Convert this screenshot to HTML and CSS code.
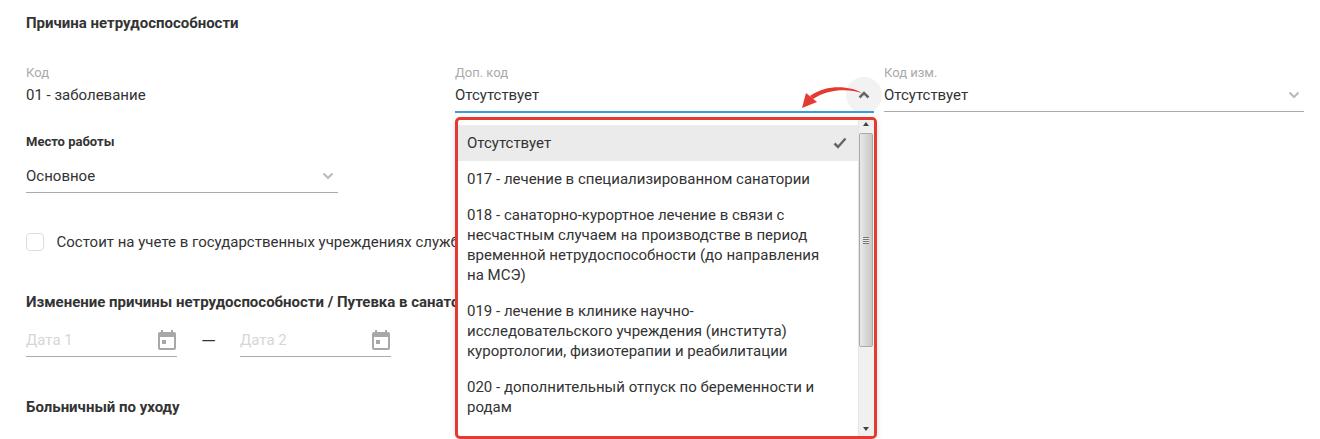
FILE: index.html
```html
<!DOCTYPE html>
<html lang="ru">
<head>
<meta charset="utf-8">
<title>Причина нетрудоспособности</title>
<link rel="stylesheet" href="styles.css">
</head>
<body>
<main class="page">
  <h2 class="section-title first">Причина нетрудоспособности</h2>
  <div class="code-row">
    <div class="field">
      <div class="field-label">Код</div>
      <div class="field-value plain">01 - заболевание</div>
    </div>
    <div class="field field-open">
      <div class="field-label">Доп. код</div>
      <div class="field-value active">
        <span>Отсутствует</span>
        <span class="icon-ring">
          <svg class="chevron dark" viewBox="0 0 12 8"><path d="M1.500 6.500 6 2l4.500 4.500" /></svg>
        </span>
      </div>
      <div class="menu">
        <ul class="menu-list">
          <li class="menu-item selected"><span>Отсутствует</span>
            <svg class="check" viewBox="0 0 14 12"><path d="M1.500 6.500 5 10l7.500-8.500" /></svg>
          </li>
          <li class="menu-item">017 - лечение в специализированном санатории</li>
          <li class="menu-item">018 - санаторно-курортное лечение в связи с несчастным случаем на производстве в период временной нетрудоспособности (до направления на МСЭ)</li>
          <li class="menu-item">019 - лечение в клинике научно-исследовательского учреждения (института) курортологии, физиотерапии и реабилитации</li>
          <li class="menu-item">020 - дополнительный отпуск по беременности и родам</li>
        </ul>
        <div class="scrollbar">
          <span class="arrow-up"></span>
          <div class="thumb"><span class="grip"></span></div>
          <span class="arrow-down"></span>
        </div>
      </div>
      <svg class="callout" viewBox="0 0 80 40">
        <path class="callout-head" d="M67 12C55 5 32 3 15 15L18 18C33 7.500 54 7.500 67 12Z" />
        <path class="callout-head" d="M7 27 11 12 22 21Z" />
      </svg>
    </div>
    <div class="field">
      <div class="field-label">Код изм.</div>
      <div class="field-value">
        <span>Отсутствует</span>
        <svg class="chevron" viewBox="0 0 12 8"><path d="M1.500 1.500 6 6l4.500-4.500" /></svg>
      </div>
    </div>
  </div>

  <div class="workplace">
    <div class="bold-label">Место работы</div>
    <div class="field-value">
      <span>Основное</span>
      <svg class="chevron" viewBox="0 0 12 8"><path d="M1.500 1.500 6 6l4.500-4.500" /></svg>
    </div>
  </div>

  <label class="check-row">
    <span class="checkbox"></span>
    <span class="check-text">Состоит на учете в государственных учреждениях службы занятости</span>
  </label>

  <h2 class="section-title change">Изменение причины нетрудоспособности / Путевка в санаторий</h2>
  <div class="date-row">
    <div class="date-field">
      <span>Дата 1</span>
      <svg class="calendar" viewBox="0 0 18 20"><path d="M3 0h2v2h8V0h2v2h1a2 2 0 0 1 2 2v14a2 2 0 0 1-2 2H2a2 2 0 0 1-2-2V4a2 2 0 0 1 2-2h1zM2 7v11h14V7zm2 3h4v4H4z" fill-rule="evenodd"/></svg>
    </div>
    <span class="dash">—</span>
    <div class="date-field">
      <span>Дата 2</span>
      <svg class="calendar" viewBox="0 0 18 20"><path d="M3 0h2v2h8V0h2v2h1a2 2 0 0 1 2 2v14a2 2 0 0 1-2 2H2a2 2 0 0 1-2-2V4a2 2 0 0 1 2-2h1zM2 7v11h14V7zm2 3h4v4H4z" fill-rule="evenodd"/></svg>
    </div>
  </div>

  <h2 class="section-title care">Больничный по уходу</h2>
</main>
</body>
</html>
```
FILE: styles.css
```css
html {
  background: #fff;
}
html, body {
  margin: 0;
  height: 439px;
  overflow: hidden;
}
body {
  font-family: Roboto, "Liberation Sans", sans-serif;
  font-size: 15px;
  color: #333;
}
.page {
  padding: 0 16px 0 26px;
}
.section-title {
  margin: 0;
  font-size: 15px;
  line-height: 20px;
  font-weight: 700;
  color: #333;
  white-space: nowrap;
}
.section-title.first { padding-top: 13px; }
.section-title.change { margin-top: 40px; }
.section-title.care { margin-top: 37px; }

.code-row {
  display: grid;
  grid-template-columns: 419px 419px 420px;
  column-gap: 10px;
  margin-top: 33px;
}
.field { position: relative; min-width: 0; }
.field-label {
  font-size: 13px;
  line-height: 14px;
  color: #aaa;
}
.field-value {
  display: flex;
  align-items: center;
  justify-content: space-between;
  height: 30px;
  padding-bottom: 3px;
  box-sizing: border-box;
  border-bottom: 1px solid #aaa;
  font-size: 15px;
  line-height: 20px;
  color: #333;
  margin-top: 2px;
}
.field-value.plain { border-bottom-color: transparent; }
.field-value.active {
  height: 31px;
  border-bottom: 2px solid #3d9bd9;
  position: relative;
}
.chevron {
  width: 12px;
  height: 8px;
  margin-right: 4px;
  fill: none;
  stroke: #bbb;
  stroke-width: 2.200;
}
.chevron.dark { stroke: #666; stroke-width: 2.500; margin: 0 1px 0 0; }
.icon-ring {
  position: absolute;
  right: -8px;
  top: -5px;
  width: 36px;
  height: 36px;
  border-radius: 50%;
  background: #f2f2f2;
  display: flex;
  align-items: center;
  justify-content: center;
  z-index: -1;
}
.menu {
  position: absolute;
  left: 0;
  top: 51px;
  width: 422px;
  height: 322px;
  box-sizing: border-box;
  border: 3px solid #e53a31;
  border-radius: 5px;
  background: #fff;
  box-shadow: 0 2px 6px rgba(0, 0, 0, .12);
  display: flex;
  overflow: hidden;
  z-index: 2;
}
.menu-list {
  list-style: none;
  margin: 0;
  padding: 5px 0 0;
  flex: 1;
  min-width: 0;
  overflow: hidden;
}
.menu-item {
  padding: 8px 36px 8px 9px;
  line-height: 20px;
  font-size: 15px;
  color: #333;
}
.menu-item.selected {
  background: #ebebeb;
  display: flex;
  align-items: center;
  justify-content: space-between;
  padding-right: 11px;
}
.check {
  width: 14px;
  height: 12px;
  fill: none;
  stroke: #666;
  stroke-width: 2.500;
}
.scrollbar {
  position: relative;
  width: 16px;
  flex: none;
  background: #f0f0f0;
  border-left: 1px solid #e6e6e6;
  box-sizing: border-box;
}
.arrow-up, .arrow-down {
  position: absolute;
  left: 4px;
  border-left: 3.500px solid transparent;
  border-right: 3.500px solid transparent;
}
.arrow-up { top: 2px; border-bottom: 4px solid #444; }
.arrow-down { bottom: 5px; border-top: 4px solid #444; }
.thumb {
  position: absolute;
  left: 0;
  right: 1px;
  top: 13px;
  height: 214px;
  box-sizing: border-box;
  border: 1px solid #a9a9a9;
  border-radius: 2px;
  background: linear-gradient(to right, #e9e9e9, #d4d4d4 60%, #c8c8c8);
}
.grip {
  position: absolute;
  left: 3px;
  right: 3px;
  top: 103px;
  height: 7px;
  background: repeating-linear-gradient(to bottom, #777 0 1px, #e8e8e8 1px 2px);
}
.callout {
  position: absolute;
  left: 340px;
  top: 15px;
  width: 80px;
  height: 40px;
  overflow: visible;
  z-index: 3;
}
.callout-head { fill: #e53a31; }

.workplace {
  width: 312px;
  margin-top: 22px;
}
.bold-label {
  font-size: 13px;
  line-height: 14px;
  font-weight: 700;
  color: #333;
}
.workplace .field-value { margin-top: 15px; height: 29px; padding-bottom: 4px; }

.check-row {
  display: flex;
  align-items: center;
  gap: 12.500px;
  margin-top: 39px;
  white-space: nowrap;
}
.checkbox {
  width: 18px;
  height: 18px;
  box-sizing: border-box;
  border: 1px solid #ddd;
  border-radius: 4px;
  flex: none;
  background: #fff;
}
.check-text { font-size: 15px; line-height: 20px; }

.date-row {
  display: flex;
  align-items: flex-start;
  gap: 24px;
  margin-top: 12px;
}
.date-field {
  width: 151px;
  height: 33px;
  box-sizing: border-box;
  display: flex;
  align-items: center;
  justify-content: space-between;
  border-bottom: 1px solid #aaa;
  color: #d6d6d6;
  font-size: 15px;
  padding-right: 1px;
}
.calendar {
  width: 18px;
  height: 20px;
  fill: #a8a8a8;
}
.dash {
  width: 15px;
  font-size: 16px;
  line-height: 36px;
  color: #333;
  transform: scaleX(1.200);
  transform-origin: left center;
}
```
